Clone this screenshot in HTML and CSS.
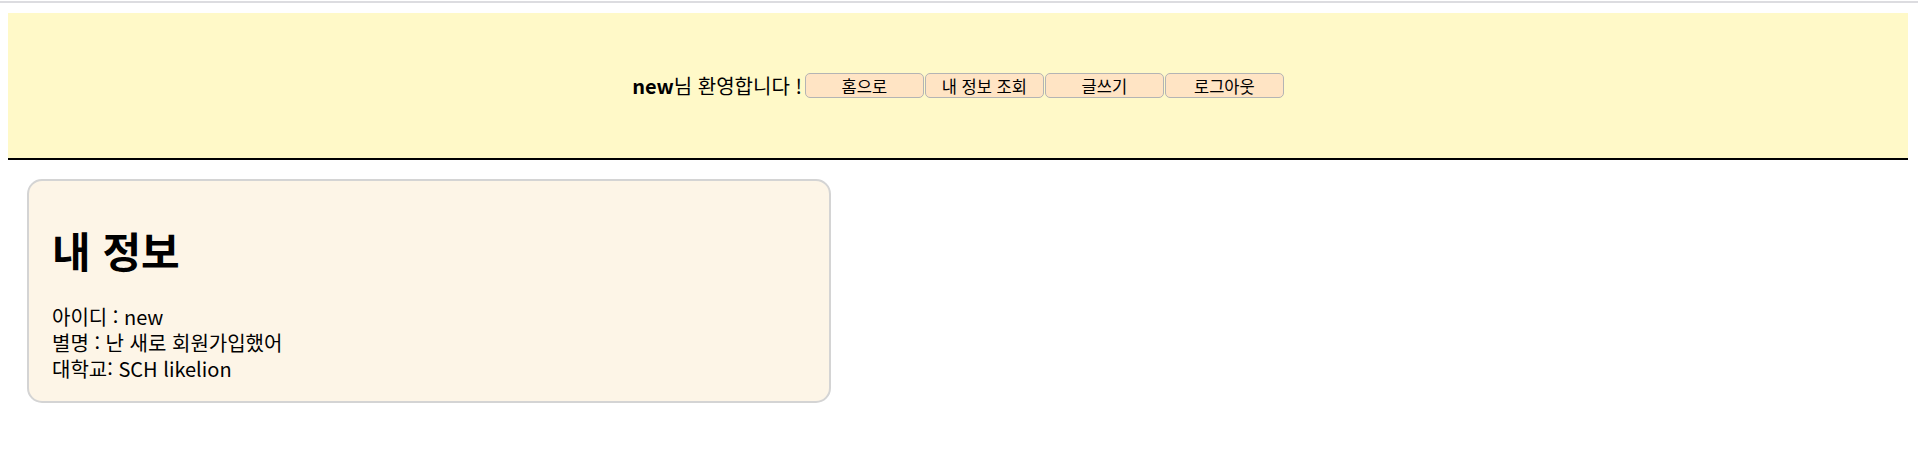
FILE: index.html
```html
<!DOCTYPE html>
<html lang="ko">
<head>
<meta charset="utf-8">
<title>내 정보</title>
<link rel="stylesheet" href="styles.css">
</head>
<body>
<div class="topline"></div>
<header class="header">
  <span class="welcome"><b>new</b>님 환영합니다 !</span>
  <nav class="nav">
    <button class="btn">홈으로</button>
    <button class="btn">내 정보 조회</button>
    <button class="btn">글쓰기</button>
    <button class="btn">로그아웃</button>
  </nav>
</header>
<main class="main">
  <section class="card">
    <h1 class="title">내 정보</h1>
    <div class="info">
      <div>아이디 : new</div>
      <div>별명 : 난 새로 회원가입했어</div>
      <div>대학교: SCH likelion</div>
    </div>
  </section>
</main>
</body>
</html>
```
FILE: styles.css
```css
html, body {
  margin: 0;
  padding: 0;
  background: #ffffff;
  font-family: "Noto Sans CJK KR", "Noto Sans", sans-serif;
  color: #000;
}
.topline {
  margin-top: 1px;
  height: 2px;
  background: #dcdce0;
}
.header {
  margin: 10px 10px 0 8px;
  height: 145px;
  background: #fff9c8;
  border-bottom: 2px solid #000;
  display: flex;
  justify-content: center;
  align-items: center;
}
.welcome {
  font-size: 20px;
  line-height: 26px;
  margin-right: 3px;
}
.welcome b {
  font-weight: 700;
}
.nav {
  display: flex;
  gap: 1px;
}
.btn {
  width: 119px;
  height: 25px;
  padding: 0;
  margin: 0;
  background: #ffe4c4;
  border: 1px solid #b4b4b4;
  border-radius: 5px;
  font-family: "Noto Sans CJK KR", "Noto Sans", sans-serif;
  font-size: 16.5px;
  line-height: 22px;
  color: #000;
}
.main {
  padding: 19px 0 0 27px;
}
.card {
  width: 754px;
  height: 220px;
  padding: 0 23px;
  box-sizing: content-box;
  background: #fdf5e7;
  border: 2px solid #d4d4d4;
  border-radius: 15px;
  display: flex;
  flex-direction: column;
}
.title {
  margin: 44px 0 29px;
  font-size: 42px;
  line-height: 50px;
  font-weight: 700;
}
.info {
  font-size: 20px;
  line-height: 26px;
}
```
